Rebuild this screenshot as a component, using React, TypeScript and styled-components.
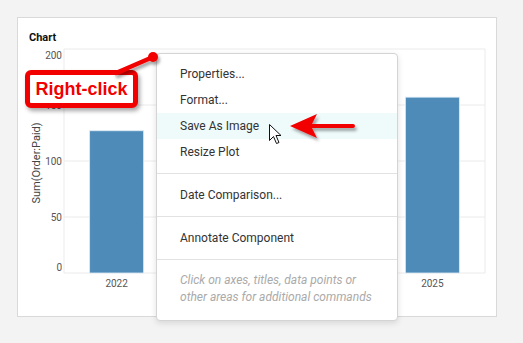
import styled, { createGlobalStyle } from "styled-components";

const GlobalStyle = createGlobalStyle`
  html, body {
    margin: 0;
    padding: 0;
    background: #f3f3f3;
    font-family: Roboto, "Liberation Sans", sans-serif;
  }
`;

const RED = "#f20000";

type Bar = { year: string; value: number; covered?: boolean };

// 2023 and 2024 sit under the context menu
const bars: Bar[] = [
  { year: "2022", value: 127 },
  { year: "2023", value: 98, covered: true },
  { year: "2024", value: 142, covered: true },
  { year: "2025", value: 157 },
];

const menuGroups = [
  ["Properties...", "Format...", "Save As Image", "Resize Plot"],
  ["Date Comparison..."],
  ["Annotate Component"],
];

// plot geometry inside the chart svg
const PLOT = { left: 46, right: 467, top: 5, bottom: 229 };
const MAX = 200;

function yOf(v: number) {
  return PLOT.bottom - (v / MAX) * (PLOT.bottom - PLOT.top);
}

// tick labels are kept inside the plot box at the ends
function tickY(t: number) {
  if (t === MAX) return yOf(t) + 10;
  if (t === 0) return yOf(t) - 2.5;
  return yOf(t) + 3.5;
}

function BarChart() {
  const band = (PLOT.right - PLOT.left) / bars.length;
  const barW = 54;
  return (
    <ChartSvg width={477} height={271} viewBox="0 0 477 271">
      {[0, 50, 100, 150, 200].map((t) => (
        <g key={t}>
          <line x1={PLOT.left} x2={PLOT.right} y1={yOf(t)} y2={yOf(t)} stroke="#ebebeb" />
          <text x={44} y={tickY(t)} textAnchor="end" fontSize={10} fill="#555">
            {t}
          </text>
        </g>
      ))}
      <line x1={PLOT.left} x2={PLOT.left} y1={PLOT.top} y2={PLOT.bottom} stroke="#ebebeb" />
      <line x1={PLOT.right} x2={PLOT.right} y1={PLOT.top} y2={PLOT.bottom} stroke="#ebebeb" />
      <text
        transform="translate(22 119) rotate(-90)"
        textAnchor="middle"
        fontSize={11}
        fill="#444"
      >
        Sum(Order:Paid)
      </text>
      {bars.map((b, i) => {
        const cx = PLOT.left + band * i + band / 2;
        return (
          <g key={b.year}>
            <rect
              x={cx - barW / 2}
              y={yOf(b.value)}
              width={barW}
              height={PLOT.bottom - yOf(b.value)}
              fill="#4f8bb9"
              stroke="#dcebf6"
              strokeWidth={0.8}
            />
            {!b.covered && (
              <text x={cx} y={242.5} textAnchor="middle" fontSize={10} fill="#555">
                {b.year}
              </text>
            )}
          </g>
        );
      })}
    </ChartSvg>
  );
}

export default function App() {
  return (
    <Page>
      <GlobalStyle />
      <Card>
        <Title>Chart</Title>
        <BarChart />
      </Card>

      <Menu>
        {menuGroups.map((group, gi) => (
          <Group key={gi} $first={gi === 0}>
            {group.map((label) => (
              <Item key={label} $active={label === "Save As Image"}>
                {label}
              </Item>
            ))}
          </Group>
        ))}
        <Hint>
          Click on axes, titles, data points or
          <br />
          other areas for additional commands
        </Hint>
      </Menu>

      <Callout>Right-click</Callout>

      <Overlay width={523} height={343} viewBox="0 0 523 343">
        <defs>
          <filter id="shadow" x="-20%" y="-20%" width="140%" height="160%">
            <feDropShadow dx="2" dy="3" stdDeviation="1.6" floodColor="#000" floodOpacity="0.35" />
          </filter>
        </defs>
        <g filter="url(#shadow)">
          <line x1={116} y1={73} x2={153} y2={57} stroke={RED} strokeWidth={4.5} strokeLinecap="round" />
          <circle cx={153} cy={57} r={5} fill={RED} />
        </g>
        <g filter="url(#shadow)">
          <line x1={308} y1={126} x2={353} y2={126} stroke={RED} strokeWidth={4} strokeLinecap="round" />
          <path d="M290 126 L317 114 L311 126 L317 138 Z" fill={RED} />
        </g>
        <path
          d="M269.5 124.5 L269.5 140.5 L273.5 136.5 L276.5 143.5 L279 142.5 L276 135.5 L281 135.5 Z"
          fill="#fff"
          stroke="#111"
          strokeWidth={1}
          strokeLinejoin="round"
        />
      </Overlay>
    </Page>
  );
}

const Page = styled.div`
  position: relative;
  width: 523px;
  height: 343px;
  padding: 17px;
  box-sizing: border-box;
  overflow: hidden;
`;

const Card = styled.div`
  display: flex;
  flex-direction: column;
  width: 480px;
  height: 300px;
  box-sizing: border-box;
  border: 1px solid #d9d9d9;
  background: #fff;
`;

const Title = styled.div`
  margin: 13px 0 0 11px;
  height: 13px;
  line-height: 13px;
  font-size: 11px;
  font-weight: 700;
  color: #111;
`;

const ChartSvg = styled.svg`
  display: block;
  font-family: Roboto, "Liberation Sans", sans-serif;
`;

const Menu = styled.div`
  position: absolute;
  left: 156px;
  top: 53px;
  width: 242px;
  height: 268px;
  box-sizing: border-box;
  display: flex;
  flex-direction: column;
  background: #fff;
  border: 1px solid #d4d4d4;
  border-radius: 4px;
  box-shadow: 0 2px 6px rgba(0, 0, 0, 0.12);
`;

const Group = styled.div<{ $first?: boolean }>`
  display: flex;
  flex-direction: column;
  padding: ${(p) => (p.$first ? "7px 0 8px" : "8px 0")};
  border-bottom: 1px solid #e2e2e2;
`;

const Item = styled.div<{ $active?: boolean }>`
  height: 26px;
  line-height: 26px;
  padding-left: 23px;
  font-size: 12px;
  color: #333;
  background: ${(p) => (p.$active ? "#effbfb" : "transparent")};
`;

const Hint = styled.div`
  padding: 12px 0 0 23px;
  font-size: 12px;
  line-height: 17px;
  font-style: italic;
  color: #aaa;
`;

const Callout = styled.div`
  position: absolute;
  left: 25px;
  top: 70px;
  width: 113px;
  height: 38px;
  box-sizing: border-box;
  display: flex;
  align-items: center;
  justify-content: center;
  border: 5px solid ${RED};
  border-radius: 6px;
  background: #fff;
  box-shadow: 2px 3px 4px rgba(0, 0, 0, 0.35);
  font-family: "Liberation Sans", Arial, sans-serif;
  font-weight: 700;
  font-size: 18px;
  color: ${RED};
`;

const Overlay = styled.svg`
  position: absolute;
  left: 0;
  top: 0;
  pointer-events: none;
`;
